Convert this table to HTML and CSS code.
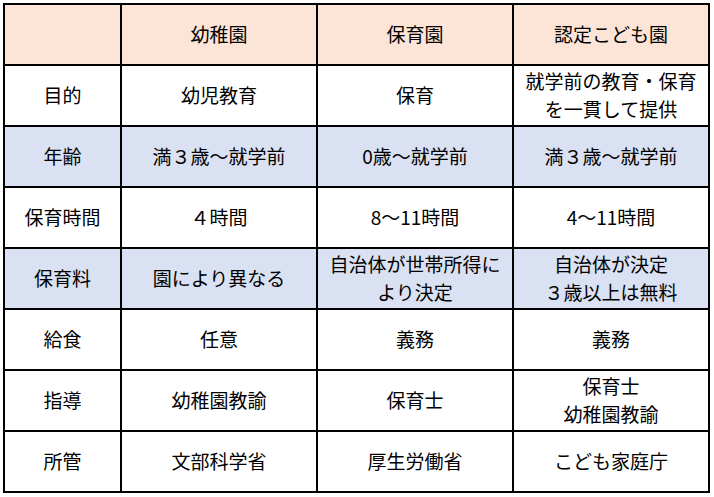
FILE: index.html
```html
<!DOCTYPE html>
<html lang="ja">
<head>
<meta charset="utf-8">
<link rel="stylesheet" href="styles.css">
</head>
<body>
<table class="cmp">
  <colgroup>
    <col class="c-head">
    <col class="c-main">
    <col class="c-main">
    <col class="c-main">
  </colgroup>
  <tr class="r-header">
    <td></td>
    <td>幼稚園</td>
    <td>保育園</td>
    <td>認定こども園</td>
  </tr>
  <tr>
    <td>目的</td>
    <td>幼児教育</td>
    <td>保育</td>
    <td>就学前の教育・保育<br>を一貫して提供</td>
  </tr>
  <tr class="r-blue">
    <td>年齢</td>
    <td>満３歳～就学前</td>
    <td>0歳～就学前</td>
    <td>満３歳～就学前</td>
  </tr>
  <tr>
    <td>保育時間</td>
    <td>４時間</td>
    <td>8～11時間</td>
    <td>4～11時間</td>
  </tr>
  <tr class="r-blue">
    <td>保育料</td>
    <td>園により異なる</td>
    <td>自治体が世帯所得に<br>より決定</td>
    <td>自治体が決定<br>３歳以上は無料</td>
  </tr>
  <tr>
    <td>給食</td>
    <td>任意</td>
    <td>義務</td>
    <td>義務</td>
  </tr>
  <tr>
    <td>指導</td>
    <td>幼稚園教諭</td>
    <td>保育士</td>
    <td>保育士<br>幼稚園教諭</td>
  </tr>
  <tr>
    <td>所管</td>
    <td>文部科学省</td>
    <td>厚生労働省</td>
    <td>こども家庭庁</td>
  </tr>
</table>
</body>
</html>
```
FILE: styles.css
```css
html, body {
  margin: 0;
  padding: 0;
  background: #ffffff;
}
body {
  padding: 3px 0 0 3px;
  font-family: "Noto Sans CJK JP", "Noto Sans", sans-serif;
  color: #000;
}
.cmp {
  border-collapse: collapse;
  table-layout: fixed;
  width: 707px;
}
.c-head { width: 117px; }
.c-main { width: 196px; }
.cmp td {
  border: 2px solid #000;
  height: 57px;
  padding: 0 0 2px 0;
  text-align: center;
  vertical-align: middle;
  font-size: 19px;
  line-height: 28px;
  white-space: nowrap;
}
.r-header td { background: #fce4d6; }
.r-blue td { background: #d9e1f2; }
```
